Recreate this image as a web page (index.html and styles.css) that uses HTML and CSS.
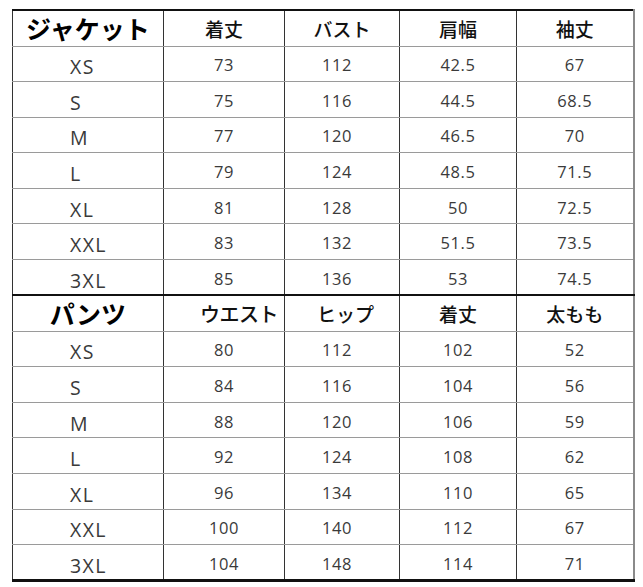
FILE: index.html
```html
<!DOCTYPE html>
<html lang="ja">
<head>
<meta charset="utf-8">
<title>サイズ表</title>
<link rel="stylesheet" href="styles.css">
</head>
<body>
<table class="size-table">
  <colgroup>
    <col class="c1"><col class="c2"><col class="c3"><col class="c4"><col class="c5">
  </colgroup>
  <tbody class="jacket">
    <tr class="head">
      <th class="title">ジャケット</th><th>着丈</th><th>バスト</th><th>肩幅</th><th>袖丈</th>
    </tr>
    <tr><td class="size">XS</td><td>73</td><td class="n3">112</td><td>42.5</td><td>67</td></tr>
    <tr><td class="size">S</td><td>75</td><td class="n3">116</td><td>44.5</td><td>68.5</td></tr>
    <tr><td class="size">M</td><td>77</td><td class="n3">120</td><td>46.5</td><td>70</td></tr>
    <tr><td class="size">L</td><td>79</td><td class="n3">124</td><td>48.5</td><td>71.5</td></tr>
    <tr><td class="size">XL</td><td>81</td><td class="n3">128</td><td>50</td><td>72.5</td></tr>
    <tr><td class="size">XXL</td><td>83</td><td class="n3">132</td><td>51.5</td><td>73.5</td></tr>
    <tr><td class="size">3XL</td><td>85</td><td class="n3">136</td><td>53</td><td>74.5</td></tr>
  </tbody>
  <tbody class="pants">
    <tr class="head">
      <th class="title">パンツ</th><th class="waist">ウエスト</th><th class="hip">ヒップ</th><th>着丈</th><th>太もも</th>
    </tr>
    <tr><td class="size">XS</td><td>80</td><td class="n3">112</td><td>102</td><td>52</td></tr>
    <tr><td class="size">S</td><td>84</td><td class="n3">116</td><td>104</td><td>56</td></tr>
    <tr><td class="size">M</td><td>88</td><td class="n3">120</td><td>106</td><td>59</td></tr>
    <tr><td class="size">L</td><td>92</td><td class="n3">124</td><td>108</td><td>62</td></tr>
    <tr><td class="size">XL</td><td>96</td><td class="n3">134</td><td>110</td><td>65</td></tr>
    <tr><td class="size">XXL</td><td>100</td><td class="n3">140</td><td>112</td><td>67</td></tr>
    <tr><td class="size">3XL</td><td>104</td><td class="n3">148</td><td>114</td><td>71</td></tr>
  </tbody>
</table>
</body>
</html>
```

FILE: styles.css
```css
html, body {
  margin: 0;
  padding: 0;
  background: #ffffff;
}

body {
  padding: 9px 0 0 12px;
}

.size-table {
  border-collapse: collapse;
  table-layout: fixed;
  width: 622px;
  font-family: "Open Sans", "Noto Sans", "Noto Sans CJK JP", sans-serif;
  color: #3a3a3a;
  border-top: 2px solid #111;
  border-bottom: 3px solid #111;
  border-left: 1px solid #888;
  border-right: 2px solid #8a8a8a;
}

.c1 { width: 151px; }
.c2 { width: 121px; }
.c3 { width: 115px; }
.c4 { width: 117px; }
.c5 { width: 117px; }

.size-table tr {
  height: 35.6px;
}

.size-table td,
.size-table th {
  padding: 3px 0 0 0;
  text-align: center;
  vertical-align: middle;
  border-top: 1px solid #9a9a9a;
  border-bottom: 1px solid #9a9a9a;
  border-left: 1px solid #333;
  border-right: 1px solid #333;
  font-size: 16.5px;
  letter-spacing: 0.6px;
  line-height: 20px;
  white-space: nowrap;
}

.size-table th {
  font-family: "Noto Sans CJK JP", sans-serif;
  font-weight: 500;
  font-size: 19px;
  letter-spacing: 0;
  color: #111;
  padding-top: 1px;
}

.size-table .head {
  height: 36px;
}

.size-table th.title {
  font-weight: 700;
  font-size: 25px;
  color: #000;
  padding-top: 0;
}

.size-table th.waist {
  font-size: 20px;
  text-align: right;
  padding-right: 6px;
  letter-spacing: -0.5px;
}

.size-table th.hip {
  font-size: 19px;
  text-align: left;
  padding-left: 32px;
}

.pants {
  border-top: 2px solid #111;
}

.size-table td.size {
  text-align: left;
  padding-left: 57px;
  font-size: 19.5px;
  letter-spacing: 1.4px;
  padding-top: 7px;
}

.size-table td.n3 {
  text-align: left;
  padding-left: 37px;
}
```
